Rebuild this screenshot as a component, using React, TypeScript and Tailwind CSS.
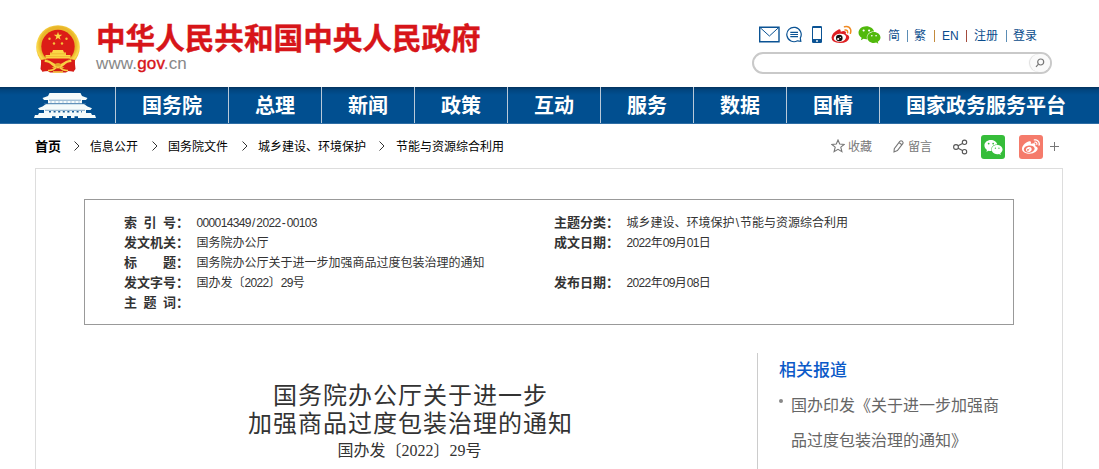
import React from "react";
import { FaWeixin, FaWeibo } from "react-icons/fa";

const SANS = "font-['Liberation_Sans','Noto_Sans_CJK_SC',sans-serif]";

function Emblem() {
  return (
    <svg className="mt-[25px] block shrink-0" width="44" height="48" viewBox="0 0 44 48">
      <defs>
        <radialGradient id="gold" cx="50%" cy="45%" r="55%">
          <stop offset="75%" stopColor="#e9b62a" />
          <stop offset="88%" stopColor="#fbdc4e" />
          <stop offset="100%" stopColor="#e6a91f" />
        </radialGradient>
      </defs>
      <path d="M6 30 L4.500 44 L6.500 46.500 L11 45.500 L14 47.500 L30 47.500 L33 45.500 L37.500 46.500 L39.500 44 L38 30 Z" fill="#cf1a16" />
      <circle cx="22" cy="22" r="21.800" fill="url(#gold)" />
      <circle cx="22" cy="21.500" r="16.700" fill="#dc1d17" />
      <path d="M22 6.800 L23 9.800 L26.200 9.800 L23.600 11.700 L24.600 14.800 L22 12.900 L19.400 14.800 L20.400 11.700 L17.800 9.800 L21 9.800 Z" fill="#fbd746" />
      <circle cx="13.500" cy="13.700" r="1.200" fill="#f5c33b" />
      <circle cx="30.500" cy="13.700" r="1.200" fill="#f5c33b" />
      <circle cx="18" cy="18.500" r="1.200" fill="#f5c33b" />
      <circle cx="26" cy="18.500" r="1.200" fill="#f5c33b" />
      <path d="M17 25 H27 L28 27.500 H30 V30 H34.500 V33.500 H9.500 V30 H14 V27.500 H16 Z" fill="#fbd746" />
      <path d="M14 28.800 H30 M9.500 31.600 H34.500" stroke="#e89b24" strokeWidth=".5" />
      <path d="M5 35 Q12 33 17 36 Q22 39 27 36 Q32 33 39 35 L38 46.500 L31 46 Q29 42 26 42 Q22 45 18 42 Q15 42 13 46 L6 46.500 Z" fill="#d81c17" />
      <path d="M9 34.500 Q14 35 17.500 38 Q22 41 26.500 38 Q30 35 35 34.500 L35.500 37 Q31 37 28.500 40 Q25 43.500 22 43 Q19 43.500 15.500 40 Q13 37 8.500 37 Z" fill="#f8cf43" />
      <path d="M12 45.500 Q17 46 20 42.500 M32 45.500 Q27 46 24 42.500 M17 47 H27" fill="none" stroke="#f8cf43" strokeWidth="1.500" />
      <ellipse cx="22" cy="39.700" rx="3" ry="1.800" fill="#e4a72a" />
    </svg>
  );
}

function Gate() {
  return (
    <svg className="ml-[34px] mt-[6px] block" width="62" height="26" viewBox="0 0 62 26">
      <g fill="#f4fbfb">
        <path d="M15.500 0 H46.500 L48 3 L53.500 5 L52 7 H48 V10.500 H14 V7 H10 L8.500 5 L14 3 Z" />
        <path d="M12 11 H50 L53.500 13.500 L58 15.200 L56.500 17 H52 V20 H57 L58 22 H61 L62 25 H44 V23.200 H40.500 V25 H37 V23 H33 V25 H29 V23 H25 V25 H21.500 V23.200 H18 V25 H0 L1 22 H4 L5 20 H10 V17 H5.500 L4 15.200 L8.500 13.500 Z" />
      </g>
      <path d="M15 7.200 H47 M10 10.800 H52 M11 17.300 H51" stroke="#4a83b0" strokeWidth=".7" />
      <path d="M15 18.700 H48" stroke="#175d97" strokeWidth="1.600" strokeDasharray="2 2.600" />
      <path d="M16 9 H46" stroke="#a9c6dc" strokeWidth="1" strokeDasharray="2 2" />
    </svg>
  );
}

function WeiboColor() {
  return (
    <svg width="21" height="19" viewBox="0 0 21 19">
      <path d="M7.500 4.500 Q9.800 3.700 9.800 6.700 Q13 5.400 14.500 6.600 Q15.400 7.500 14.700 9 Q18.500 10 18.200 13 Q17 18 9 18 Q.5 17.600 .5 12.500 Q1.200 7.500 7.500 4.500 Z" fill="#df1f22" />
      <ellipse cx="8.900" cy="12.700" rx="6.200" ry="4" transform="rotate(-8 9 12.700)" fill="#fff" />
      <circle cx="8.300" cy="13" r="3.300" fill="#111" />
      <circle cx="7.200" cy="14" r="1.100" fill="#fff" />
      <circle cx="9.300" cy="12.400" r=".6" fill="#fff" />
      <path d="M13.500 1.800 Q18 .7 19.500 4.300 Q20.200 6.200 19.400 8.300 M14 5 Q16.900 4.600 16.600 7.800" fill="none" stroke="#f08a22" strokeWidth="1.500" strokeLinecap="round" />
    </svg>
  );
}

function Mixed({ children }: { children: string }) {
  return (
    <>
      {children.split(/([0-9]+|[/\\-])/).map((s, i) => {
        if (/^[0-9]+$/.test(s)) return <span key={i} className="tracking-[-0.64px]">{s}</span>;
        if (/^[/\\-]$/.test(s)) return <span key={i} className="pl-[1.3px] pr-[0.9px]">{s}</span>;
        return <React.Fragment key={i}>{s}</React.Fragment>;
      })}
    </>
  );
}

function Field({ label, value }: { label: string; value: string }) {
  return (
    <div className="flex h-5 items-center">
      <span className="flex w-[52px] justify-between text-[13px] font-bold">
        {label.split("").map((c, i) => <span key={i}>{c}</span>)}
      </span>
      <span className="w-[20.500px] text-[13px] font-bold">：</span>
      <span className="text-[12px]"><Mixed>{value}</Mixed></span>
    </div>
  );
}

const nav = ["总理", "新闻", "政策", "互动", "服务", "数据", "国情"];

function Chevron({ className }: { className: string }) {
  return (
    <svg className={className} width="6" height="10" viewBox="0 0 6 10" fill="none" stroke="#333">
      <path d="M.5 .5 L5 5 L.5 9.500" />
    </svg>
  );
}

function Header() {
  return (
    <header className="flex h-[87px]">
      <div className="flex w-[752px] pl-[36px]">
        <Emblem />
        <div className="ml-[16px] pt-[20px]">
          <h1 className="h-[35px] text-[29.6px] font-bold leading-[37px] text-[#d71519] [-webkit-text-stroke:0.4px_#d71519]">中华人民共和国中央人民政府</h1>
          <p className="text-[17px] leading-[17px] tracking-[0.15px] text-[#888]">
            www.<span className="text-[#d71519] [-webkit-text-stroke:0.4px_#d71519]">gov</span>.cn
          </p>
        </div>
      </div>
      <div className="w-[300px] pt-[25px]">
        <div className="flex h-[19px] items-center pl-[7px] text-[12px] text-[#0a4c8c]">
          <svg width="21" height="17" viewBox="0 0 21 17" fill="none" stroke="#0b5394" strokeWidth="1.400">
            <path d="M.7 1.200 H20 V15.800 H.7 Z" />
            <path d="M1 1.500 L10.400 10 L19.700 1.500" strokeWidth="1" />
          </svg>
          <svg className="ml-[6px]" width="17" height="17" viewBox="0 0 17 17" fill="none" stroke="#0b5394" strokeWidth="1.200">
            <path d="M14.300 12 A7.200 7.200 0 1 0 11.500 14.800 L14.800 15.300 Z M4.300 6.300 H12 M4.300 8.500 H12 M4.300 10.700 H12" />
          </svg>
          <svg className="ml-[9px]" width="10" height="17" viewBox="0 0 10 17">
            <rect width="10" height="17" rx="1.300" fill="#0b5394" />
            <rect x="1" y="2" width="8" height="11" fill="#fff" />
            <circle cx="5" cy="15" r=".9" fill="#fff" />
          </svg>
          <span className="ml-[9px]"><WeiboColor /></span>
          <FaWeixin className="ml-[6px] h-[20px] w-[23px] text-[#51b90c]" preserveAspectRatio="none" />
          <div className="ml-[7px] flex items-center pt-[2px] leading-[18px]">
            <span className="w-[19px]">简</span>
            <i className="mr-[6px] h-[12px] w-px bg-[#5b8db5]" />
            <span className="w-[20px]">繁</span>
            <i className="mr-[7px] h-[12px] w-px bg-[#c38a3c]" />
            <span className="w-[24px]">EN</span>
            <i className="mr-[7px] h-[12px] w-px bg-[#a34a3c]" />
            <span className="w-[32px]">注册</span>
            <i className="mr-[6px] h-[12px] w-px bg-[#5b8db5]" />
            <span>登录</span>
          </div>
        </div>
        <div className="mt-[8px] flex h-[22px] justify-end rounded-full border-2 border-[#c9c9c9]">
          <div className="flex h-[18px] w-[20px] items-center justify-center rounded-full bg-[#fafafa] shadow-[-1px_0_1px_#ddd]">
            <svg width="10" height="10" viewBox="0 0 10 10" fill="none" stroke="#777" strokeWidth="1.200">
              <circle cx="5.700" cy="4" r="3" />
              <path d="M3.500 6.200 L1 8.800" />
            </svg>
          </div>
        </div>
      </div>
    </header>
  );
}

function Breadcrumb() {
  return (
    <div className="flex h-[44px] items-center pl-[35px] text-[12px] text-black">
      <b className="w-[39px] pt-px text-[13px]">首页</b>
      <Chevron className="mr-[10px]" />
      <span className="w-[62px] pt-px">信息公开</span>
      <Chevron className="mr-[10px]" />
      <span className="w-[74px] pt-px">国务院文件</span>
      <Chevron className="mr-[10px]" />
      <span className="w-[121px] pt-px">城乡建设、环境保护</span>
      <Chevron className="mr-[11px]" />
      <span className="w-[435px] pt-px">节能与资源综合利用</span>
      <svg width="14" height="14" viewBox="0 0 14 14" fill="none" stroke="#777" strokeWidth="1.100">
        <path d="M7 1 L8.700 5 L13.200 5.400 L9.800 8.200 L10.900 12.600 L7 10.300 L3.100 12.600 L4.200 8.200 L.8 5.400 L5.300 5 Z" />
      </svg>
      <span className="ml-[3px] pt-px text-[#777]">收藏</span>
      <svg className="ml-[21px]" width="11" height="13" viewBox="0 0 11 13" fill="none" stroke="#777" strokeWidth="1.100">
        <path d="M1 12 L1.300 8.600 L6.800 1.300 Q8 .3 9.300 1.300 Q10.600 2.500 9.800 3.700 L4.400 10.600 Z M6 2.500 L8.900 4.800" />
      </svg>
      <span className="ml-[4px] pt-px text-[#777]">留言</span>
      <svg className="ml-[21px] mt-px" width="15" height="16" viewBox="0 0 15 16" fill="none" stroke="#555" strokeWidth="1.100">
        <circle cx="3" cy="8" r="2.400" />
        <circle cx="11.500" cy="3.300" r="2.200" />
        <circle cx="11.500" cy="12.700" r="2.200" />
        <path d="M5.100 6.800 L9.500 4.400 M5.100 9.200 L9.500 11.600" />
      </svg>
      <span className="ml-[13px] mt-[2px] flex h-6 w-6 items-center justify-center rounded-[3px] bg-[#36bd3a] text-white">
        <FaWeixin size={19} />
      </span>
      <span className="ml-[14px] mt-[2px] flex h-6 w-6 items-center justify-center rounded-[3px] bg-[#f57b6b] text-white">
        <FaWeibo size={18} />
      </span>
      <svg className="ml-[7px]" width="10" height="10" viewBox="0 0 10 10" stroke="#777">
        <path d="M0 5.500 H9 M4.500 1 V10" />
      </svg>
    </div>
  );
}

export default function App() {
  return (
    <div className={`h-[469px] w-[1099px] overflow-hidden whitespace-nowrap bg-white ${SANS}`}>
      <Header />
      <nav className="flex h-[37px] border-b border-[#2e6da4] bg-[linear-gradient(#04335e_0,#01457f_3px,#014f90_8px,#014f90_100%)] text-[20px] font-bold leading-[38px] text-white">
        <div className="w-[115px]"><Gate /></div>
        <div className="w-[113px] border-l border-[#b8c9d9] text-center">国务院</div>
        {nav.map((n) => (
          <div key={n} className="w-[93px] border-l border-[#b8c9d9] text-center">{n}</div>
        ))}
        <div className="h-[36px] flex-1 border-l border-[#b8c9d9] pl-[26px]">国家政务服务平台</div>
      </nav>
      <Breadcrumb />
      <main className="ml-[35px] h-[320px] w-[1028px] border border-[#ddd] pl-[48px] pt-[30px] text-[#333]">
        <section className="flex h-[126px] w-[930px] border border-[#999] pl-[39px] pt-[13px]">
          <div className="w-[430px]">
            <Field label="索引号" value="000014349/2022-00103" />
            <Field label="发文机关" value="国务院办公厅" />
            <Field label="标题" value="国务院办公厅关于进一步加强商品过度包装治理的通知" />
            <Field label="发文字号" value="国办发〔2022〕29号" />
            <Field label="主题词" value="" />
          </div>
          <div>
            <Field label="主题分类" value="城乡建设、环境保护\节能与资源综合利用" />
            <Field label="成文日期" value="2022年09月01日" />
            <div className="h-5" />
            <Field label="发布日期" value="2022年09月08日" />
          </div>
        </section>
        <div className="flex pt-[28px]">
          <article className="w-[673px] pt-[29px] text-center">
            <h2 className="pr-[20px] text-[24px] leading-[28px] tracking-[1px]">
              国务院办公厅关于进一步
              <br />
              加强商品过度包装治理的通知
            </h2>
            <p className="pr-[22px] font-['Liberation_Serif','Noto_Sans_CJK_SC',serif] text-[16px] leading-[26px]">国办发〔2022〕29号</p>
          </article>
          <aside className="h-[140px] border-l border-[#ccc] pl-[21px]">
            <h3 className="pt-px text-[17px] font-medium leading-[34px] text-[#0c5ac8]">相关报道</h3>
            <div className="flex text-[16px] leading-[35px] text-[#666]">
              <i className="mr-[8px] mt-[11px] h-[4px] w-[4px] rounded-full bg-[#888]" />
              <p>
                国办印发《关于进一步加强商
                <br />
                品过度包装治理的通知》
              </p>
            </div>
          </aside>
        </div>
      </main>
    </div>
  );
}
